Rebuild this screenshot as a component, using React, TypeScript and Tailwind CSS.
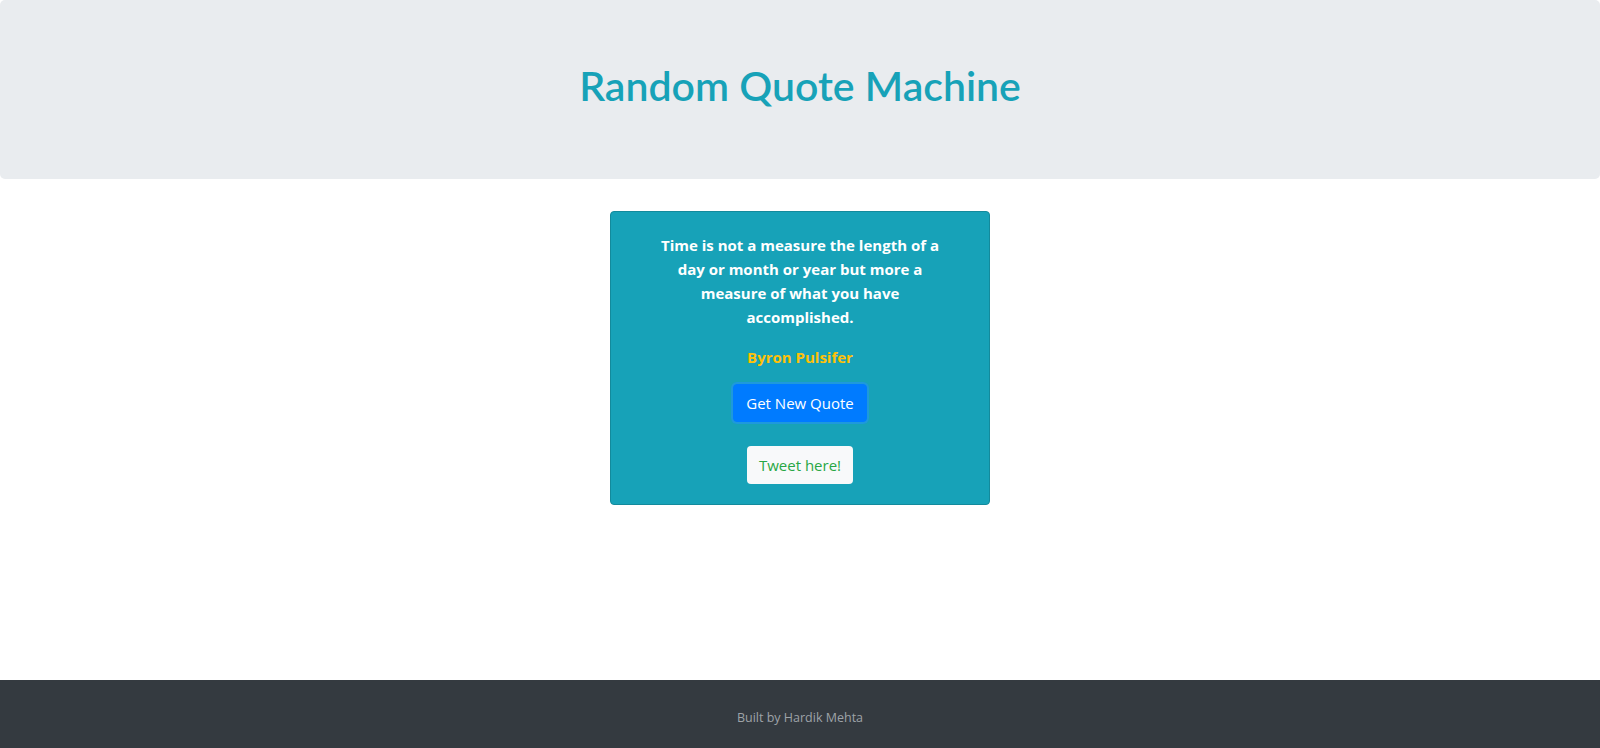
import React from "react";

const quote = {
    text: "Time is not a measure the length of a day or month or year but more a measure of what you have accomplished.",
    author: "Byron Pulsifer",
};

export default function App() {
    return (
        <div className="min-h-[748px] flex flex-col bg-white font-['Open_Sans',sans-serif]">
            {/* Header */}
            <header className="h-[179px] bg-[#e9ecef] rounded-[5px] flex items-center justify-center">
                <h1 className="text-[41px] font-semibold text-[#17a2b8] leading-none -mt-[8px] font-['Lato',sans-serif]">
                    Random Quote Machine
                </h1>
            </header>

            {/* Quote card */}
            <main className="flex-1 flex justify-center pt-8">
                <div className="w-[380px] h-[294px] bg-[#17a2b8] border border-[#138a9c] rounded-[4px] flex flex-col items-center pt-[21px] px-[36px]">
                    <p className="text-white font-bold text-[15px] leading-6 text-center">
                        {quote.text}
                    </p>
                    <h6 className="mt-4 text-[#ffc107] font-bold text-[15px] leading-6">
                        {quote.author}
                    </h6>
                    <button className="mt-[15px] h-[38px] px-3 bg-[#007bff] text-white text-[15px] rounded-[4px] border border-[#007bff] shadow-[0_0_0_2px_rgba(38,143,255,0.5)]">
                        Get New Quote
                    </button>
                    <a
                        href="#"
                        className="mt-6 h-[38px] px-3 flex items-center bg-[#f8f9fa] text-[#28a745] text-[15px] rounded-[4px]"
                    >
                        Tweet here!
                    </a>
                </div>
            </main>

            {/* Footer */}
            <footer className="h-[68px] bg-[#343a40] flex items-center justify-center pt-2">
                <span className="text-[12.5px] text-[#9ea3a8]">Built by Hardik Mehta</span>
            </footer>
        </div>
    );
}
